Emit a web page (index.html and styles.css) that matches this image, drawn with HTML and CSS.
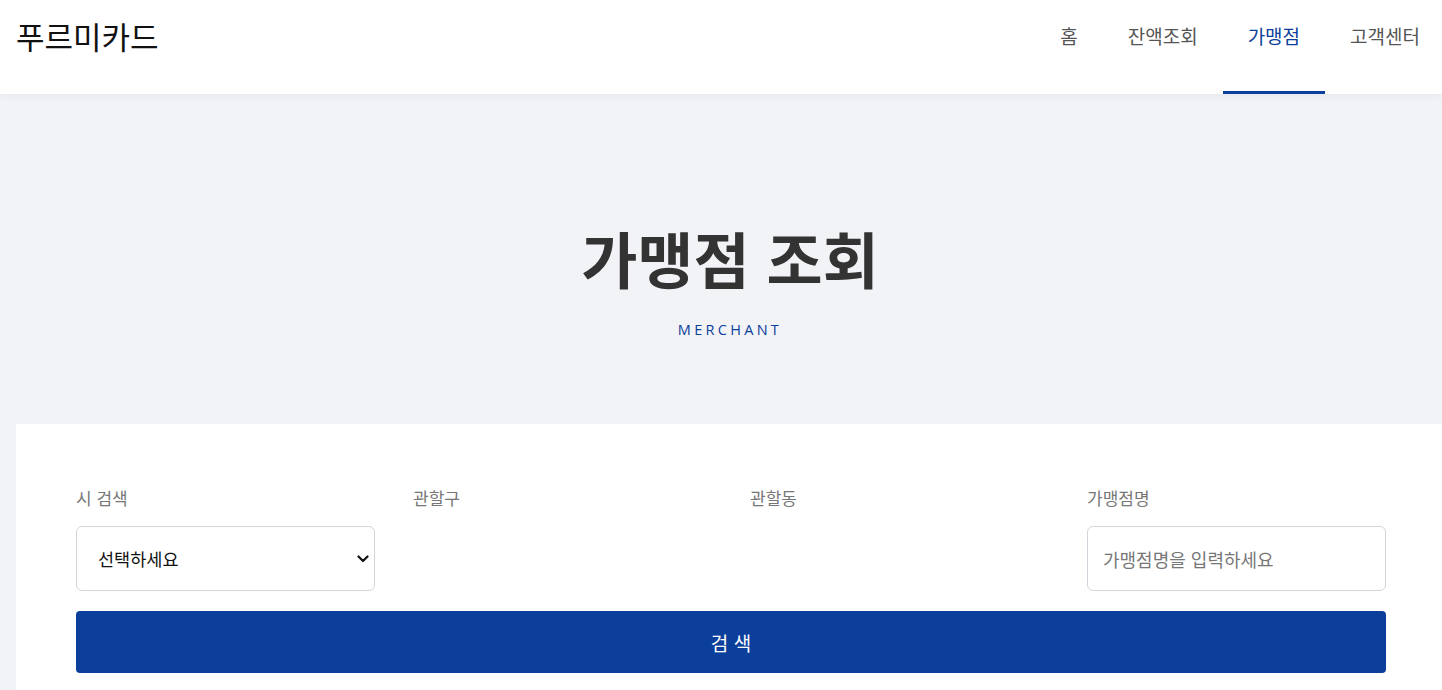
FILE: index.html
```html
<!DOCTYPE html>
<html lang="ko">
<head>
    <meta charset="utf-8">
    <title>푸르미카드 - 가맹점 조회</title>
    <link rel="stylesheet" href="styles.css">
</head>
<body>
    <header class="top">
        <div class="logo">푸르미카드</div>
        <nav class="menu">
            <a href="#" class="menu-item">홈</a>
            <a href="#" class="menu-item">잔액조회</a>
            <a href="#" class="menu-item active">가맹점</a>
            <a href="#" class="menu-item">고객센터</a>
        </nav>
    </header>

    <section class="hero">
        <h1>가맹점 조회</h1>
        <p class="sub">MERCHANT</p>
    </section>

    <main class="search-box">
        <form class="search-form" onsubmit="return false">
            <div class="field">
                <label for="city">시 검색</label>
                <div class="select-wrap">
                    <select id="city">
                        <option>선택하세요</option>
                    </select>
                    <svg class="chevron" width="12" height="8" viewBox="0 0 12 8">
                        <path d="M1.5 1.5 L6 6 L10.5 1.5" fill="none" stroke="#111" stroke-width="2.2" stroke-linecap="round" stroke-linejoin="round"/>
                    </svg>
                </div>
            </div>
            <div class="field">
                <label>관할구</label>
            </div>
            <div class="field">
                <label>관할동</label>
            </div>
            <div class="field">
                <label for="shop">가맹점명</label>
                <input id="shop" type="text" placeholder="가맹점명을 입력하세요">
            </div>
            <button class="btn-search" type="submit">검 색</button>
        </form>
    </main>
</body>
</html>
```

FILE: styles.css
```css
*{
    box-sizing: border-box;
}
html,body{
    margin: 0;
    overflow: hidden;
}
body{
    background-color: #f2f3f7;
    font-family: "Noto Sans CJK KR", "Noto Sans", sans-serif;
    color: #333;
}

/* header */
.top{
    height: 94px;
    background-color: #fff;
    display: flex;
    justify-content: space-between;
    align-items: flex-start;
    padding-left: 16px;
    box-shadow: 0 2px 8px rgba(0,0,0,.05);
    position: relative;
}
.logo{
    font-size: 31px;
    line-height: 32px;
    padding-top: 20px;
    color: #111;
    font-weight: 400;
}
.menu{
    display: flex;
    height: 94px;
}
.menu-item{
    display: block;
    height: 94px;
    padding: 23px 25px 0;
    font-size: 19px;
    line-height: 26px;
    color: #555;
    text-decoration: none;
    border-bottom: 3px solid transparent;
}
.menu-item:last-child{
    padding-right: 22px;
}
.menu-item.active{
    color: #0c3f9b;
    border-bottom-color: #0c3f9b;
}

/* title area */
.hero{
    height: 330px;
    text-align: center;
    padding: 124px 0 0 18px;
}
.hero h1{
    margin: 0;
    font-size: 61px;
    line-height: 80px;
    font-weight: 600;
    color: #333;
}
.hero .sub{
    margin: 22px 0 0;
    font-family: "Open Sans", "Noto Sans", sans-serif;
    font-size: 14.5px;
    letter-spacing: 3.3px;
    color: #0c3f9b;
    line-height: 20px;
}

/* search card */
.search-box{
    margin-left: 16px;
    background-color: #fff;
    padding: 62px 56px 60px 60px;
    min-height: 400px;
}
.search-form{
    display: grid;
    grid-template-columns: repeat(4, 299px);
    column-gap: 38px;
    row-gap: 20px;
}
.field label{
    display: block;
    font-size: 17px;
    line-height: 24px;
    color: #777;
    margin-bottom: 16px;
}
.select-wrap{
    position: relative;
}
.chevron{
    position: absolute;
    right: 6px;
    top: 29px;
    pointer-events: none;
}
.field select,
.field input{
    width: 100%;
    height: 65px;
    border: 1px solid #d2d5dc;
    border-radius: 6px;
    background-color: #fff;
    font-family: inherit;
    color: #111;
    outline: none;
}
.field select{
    -webkit-appearance: none;
    appearance: none;
    font-size: 17.5px;
    padding: 0 30px 0 21px;
}
.field input{
    font-size: 18px;
    padding: 0 16px 0 15px;
}
.field input::placeholder{
    color: #777;
}
.btn-search{
    grid-column: 1 / -1;
    height: 62px;
    border: none;
    border-radius: 4px;
    background-color: #0c3f9b;
    color: #fff;
    font-family: inherit;
    font-size: 19px;
    cursor: pointer;
}
```
